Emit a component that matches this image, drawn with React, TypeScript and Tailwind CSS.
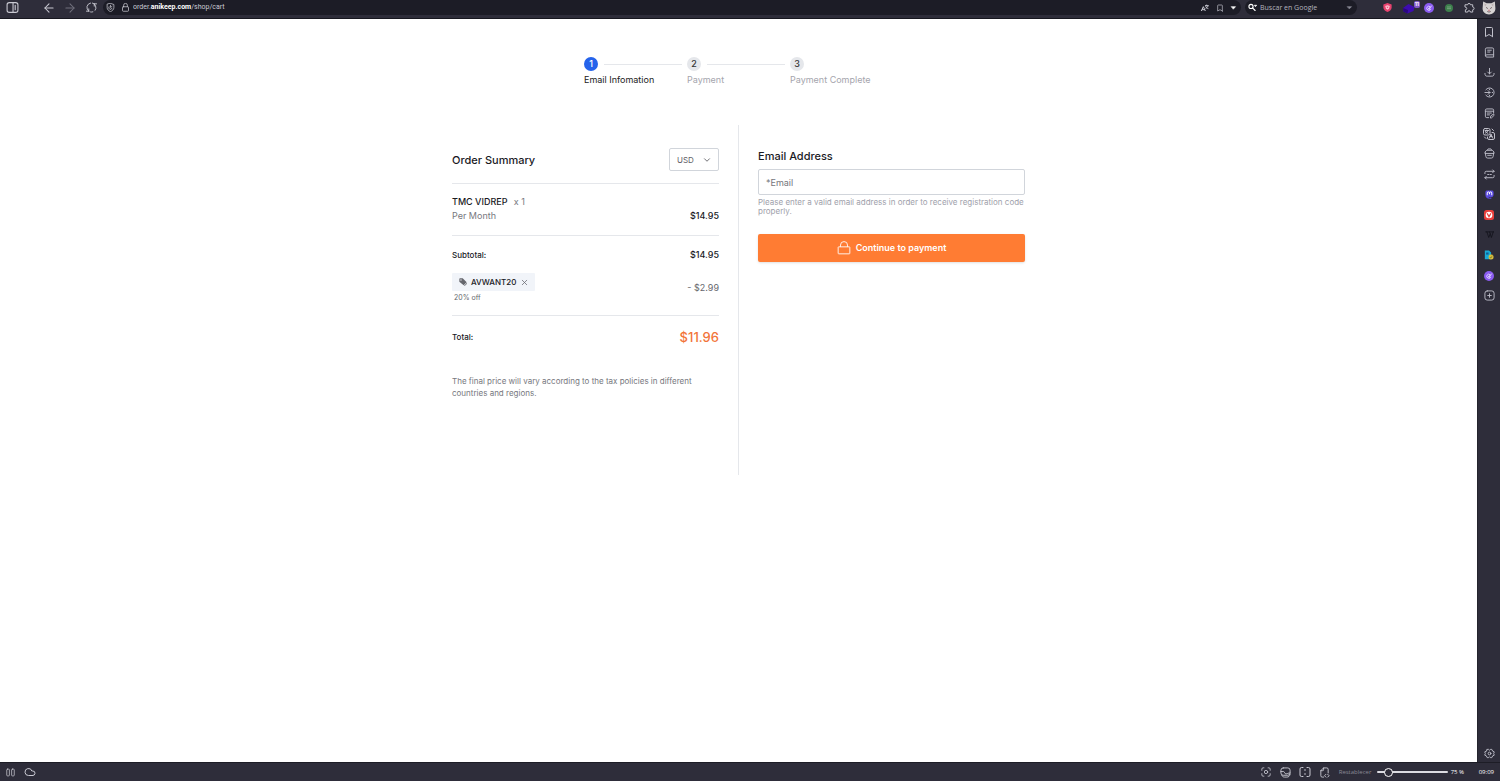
import type { ReactNode } from "react";
import {
  ArrowLeft,
  ArrowRight,
  Bookmark,
  ChevronDown,
  Cloud,
  X,
} from "lucide-react";

function Icon({ children, className = "size-3" }: { children: ReactNode; className?: string }) {
  return (
    <svg
      className={className}
      viewBox="0 0 24 24"
      fill="none"
      stroke="currentColor"
      strokeWidth="2"
      strokeLinecap="round"
      strokeLinejoin="round"
      aria-hidden="true"
    >
      {children}
    </svg>
  );
}

function IconButton({ label, className, children }: { label: string; className: string; children: ReactNode }) {
  return (
    <button type="button" aria-label={label} className={`flex shrink-0 items-center justify-center ${className}`}>
      {children}
    </button>
  );
}

function SwirlBadge({ className = "size-[10px]" }: { className?: string }) {
  return (
    <svg className={className} viewBox="0 0 24 24" aria-hidden="true">
      <circle cx="12" cy="12" r="12" fill="#8b5cf0" />
      <path
        d="M15 9a5 5 0 1 0 1 6l-4 0 6-8M9 15l4-4"
        fill="none"
        stroke="#e6dcff"
        strokeWidth="2"
        strokeLinecap="round"
        strokeLinejoin="round"
      />
    </svg>
  );
}

function TopBar() {
  return (
    <header className="flex h-[19px] shrink-0 items-center border-b border-[#17171f] bg-[#2e2d3a] pb-[3px] text-[#c9c9d2]">
      <IconButton label="Panel" className="ml-[6px] w-[13px]">
        <Icon className="size-[13px]">
          <rect x="2" y="3" width="20" height="18" rx="4" />
          <path d="M13 3v18M17 8v8" />
        </Icon>
      </IconButton>
      <IconButton label="Atrás" className="ml-5 w-5">
        <ArrowLeft className="size-[14px]" strokeWidth={1.8} />
      </IconButton>
      <IconButton label="Adelante" className="w-[22px] text-[#71717d]">
        <ArrowRight className="size-[14px]" strokeWidth={1.8} />
      </IconButton>
      <IconButton label="Recargar" className="w-5">
        <Icon className="size-[11px]">
          <path d="M6 20A10 10 0 0 1 10 2.200M14 2.200A10 10 0 0 1 20 18M6 20v-5M6 20H1M18 4v5M18 4h5M10 21.800A10 10 0 0 0 15 21.500" />
        </Icon>
      </IconButton>

      <div className="ml-[2px] flex h-[15px] min-w-0 flex-1 items-center rounded-full bg-[#1c1c26] pr-[2px]">
        <IconButton label="Bloqueador" className="w-[14px]">
          <Icon className="size-[9px]">
            <path d="M12 1l9 3v8c0 5-4 9-9 11-5-2-9-6-9-11V4z" />
            <path d="M12 6v6l4-3M8 10a4.500 4.500 0 1 0 8 4" />
          </Icon>
        </IconButton>
        <IconButton label="Conexión segura" className="w-4">
          <Icon className="size-[9px]">
            <rect x="4" y="10" width="16" height="12" rx="2" />
            <path d="M7 10V6a5 5 0 0 1 10 0v4" />
          </Icon>
        </IconButton>
        <span className="flex-1 truncate font-['Roboto',sans-serif] text-[7px] leading-[15px]">
          order.<b className="font-bold text-white">anikeep.com</b>/shop/cart
        </span>
        <IconButton label="Traducir" className="w-4">
          <svg className="size-[8px]" viewBox="0 0 24 24" fill="none" stroke="currentColor" strokeWidth="3">
            <path d="M1 21L7 8l6 13M3 17h8M12 5h11M17 2v3M21 5c-1 4-4 7-7 8M14 7c1 3 4 6 8 7" />
          </svg>
        </IconButton>
        <IconButton label="Guardar marcador" className="w-[14px]">
          <Bookmark className="size-[8px]" />
        </IconButton>
        <IconButton label="Más marcadores" className="w-3 text-white">
          <Icon className="size-[7px]">
            <path d="M5 9h14l-7 8z" fill="currentColor" />
          </Icon>
        </IconButton>
      </div>

      <label className="ml-1 flex h-[15px] w-[112px] shrink-0 items-center rounded-full bg-[#1c1c26] pr-1">
        <Icon className="mx-[3px] size-[9px] shrink-0 text-white">
          <circle cx="8" cy="9" r="5.500" strokeWidth="3" />
          <path d="M12 13l7 7" strokeWidth="3" />
          <path d="M18 6h5l-2.500 3z" fill="currentColor" />
        </Icon>
        <input
          type="search"
          aria-label="Buscar"
          placeholder="Buscar en Google"
          className="min-w-0 flex-1 bg-transparent font-['Open_Sans',sans-serif] text-[7px] leading-[15px] outline-none placeholder:text-[#b4b4be]"
        />
        <Icon className="size-[7px] text-[#8d8d98]">
          <path d="M5 9h14l-7 7z" fill="currentColor" />
        </Icon>
      </label>

      <div className="ml-5 flex shrink-0 items-center">
        <IconButton label="Escudo" className="w-5">
          <svg className="size-[9px]" viewBox="0 0 24 24">
            <path d="M12 0l11 4v8c0 6-5 10-11 12C6 22 1 18 1 12V4z" fill="#e8436f" />
            <path d="M12 6l6 2-2 7-4 3-4-3-2-7z" fill="#ffc6d5" />
            <path d="M9 10h6l-3 4z" fill="#e8436f" />
          </svg>
        </IconButton>
        <IconButton label="Extensión, 11 avisos" className="relative w-6">
          <svg className="size-[12px]" viewBox="0 0 24 24">
            <path d="M0 12L11 4l12 6-2 8-12 5-8-4z" fill="#3e0cb0" />
            <path d="M0 12l10 4-1 7-8-4z" fill="#2a0780" />
          </svg>
          <span className="absolute -top-[1px] right-[1px] rounded-[2px] bg-[#8057c9] px-[1px] text-[5px] leading-[7px] font-bold text-white">
            11
          </span>
        </IconButton>
        <IconButton label="Extensión morada" className="w-4">
          <SwirlBadge />
        </IconButton>
        <IconButton label="Extensión verde" className="w-6">
          <svg className="size-[8px]" viewBox="0 0 24 24">
            <circle cx="12" cy="12" r="12" fill="#3d7f4c" />
            <path d="M6 9h12M6 14h12" stroke="#8fb596" strokeWidth="2" />
          </svg>
        </IconButton>
        <IconButton label="Extensiones" className="w-4">
          <Icon className="size-[11px]">
            <path d="M3 6h5a3 3 0 1 1 6 0h5v5a3 3 0 1 1 0 6v5h-5a3 3 0 0 0-6 0H3v-5a3 3 0 0 0 0-6z" />
          </Icon>
        </IconButton>
        <IconButton label="Perfil" className="mr-[3px] ml-[3px] w-[17px]">
          <svg className="size-[14px]" viewBox="0 0 24 24">
            <path d="M2 1l6 3h8l6-3 1 12c0 6-5 10-11 10S1 19 1 13z" fill="#d6d3d3" />
            <path d="M4 4l4 2-3 4zM20 4l-4 2 3 4z" fill="#bdb3b4" />
            <path d="M7 11l3 2M17 11l-3 2M9 18q3 2 6 0" stroke="#68575b" strokeWidth="1.500" fill="none" />
            <circle cx="12" cy="16" r="1.500" fill="#cf8088" />
          </svg>
        </IconButton>
      </div>
    </header>
  );
}

const panels: { label: string; icon: ReactNode }[] = [
  { label: "Marcadores", icon: <Bookmark className="size-[12px]" /> },
  {
    label: "Lista de lectura",
    icon: (
      <Icon className="size-[11px]">
        <path d="M3 19V5a3 3 0 0 1 3-3h12a3 3 0 0 1 3 3v12H6a2 2 0 0 0 0 5h15v-5M8 7h8M8 11h5" />
      </Icon>
    ),
  },
  {
    label: "Descargas",
    icon: (
      <Icon className="size-[11px]">
        <path d="M12 3v12M8 11l4 4 4-4M2 14c0 5 2 6 5 6h10c3 0 5-1 5-6" />
      </Icon>
    ),
  },
  {
    label: "Historial",
    icon: (
      <Icon className="size-[11px]">
        <path d="M4 6a10 10 0 1 1 0 12M2 12h11M9 8l4 4-4 4M12 5v1M18 12h1M12 18v1" />
      </Icon>
    ),
  },
  {
    label: "Notas",
    icon: (
      <Icon className="size-[11px]">
        <path d="M10 21H6a3 3 0 0 1-3-3V5a3 3 0 0 1 3-3h12a3 3 0 0 1 3 3v6M3 7h18M7 11h9M7 15h5M14 21l1-4 6-4 1 3-5 5z" />
      </Icon>
    ),
  },
  {
    label: "Traductor",
    icon: (
      <Icon className="size-3">
        <rect x="1" y="1" width="13" height="13" rx="3" />
        <path d="M4 5h7M7.500 4v1M10 5c-1 3-3 4-5 5M5 7l5 4M18 9h2a3 3 0 0 1 3 3v8a3 3 0 0 1-3 3h-8a3 3 0 0 1-3-3v-2M13 20l3-8 3 8M14 17h4M18 2l3 3M3 18l3 3" />
      </Icon>
    ),
  },
  {
    label: "Sesiones",
    icon: (
      <Icon className="size-[11px]">
        <path d="M7 5l2-3h6l2 3M2 11c0-4 3-6 6-6h8c3 0 6 2 6 6zM3 11l1 7a4 4 0 0 0 4 4h8a4 4 0 0 0 4-4l1-7M8 16h8" />
      </Icon>
    ),
  },
  {
    label: "Feeds",
    icon: (
      <Icon className="size-[11px]">
        <path d="M2 10V8a3 3 0 0 1 3-3h17M19 2l3 3-3 3M22 14v2a3 3 0 0 1-3 3H2M5 16l-3 3 3 3M8 12h3M14 12h2" />
      </Icon>
    ),
  },
  {
    label: "Mastodon",
    icon: (
      <svg className="size-[9px]" viewBox="0 0 24 24">
        <path d="M5 1h14c3 1 4 3 4 6 0 10-1 11-8 12l-6-1c1 3 4 3 8 2v3C8 25 1 22 1 12V6c0-3 1-4 4-5z" fill="#5b4be0" />
        <path d="M6 14V8c0-4 6-4 6 0v3-3c0-4 6-4 6 0v6" stroke="#fff" strokeWidth="2.500" fill="none" />
      </svg>
    ),
  },
  {
    label: "Vivaldi",
    icon: (
      <svg className="size-[10px]" viewBox="0 0 24 24">
        <rect width="24" height="24" rx="6" fill="#e8403c" />
        <circle cx="12" cy="12" r="8" fill="#fff" />
        <path d="M8 9l4 7 4-7" stroke="#e8403c" strokeWidth="3" strokeLinecap="round" fill="none" />
      </svg>
    ),
  },
  {
    label: "Wikipedia",
    icon: (
      <Icon className="size-[9px] text-[#101018]">
        <path d="M2 5h6M10 5h6M18 5h5M5 5l5 15 4-10M12 5l5 15 5-15" />
      </Icon>
    ),
  },
  {
    label: "Documentos",
    icon: (
      <svg className="size-[10px]" viewBox="0 0 24 24">
        <path d="M2 1h10l5 5v16H2z" fill="#19a9d6" />
        <path d="M5 6h6v5H5z" fill="#125c94" />
        <circle cx="17" cy="17" r="6" fill="#d8bd3d" />
        <path d="M14 17l2 2 4-4" stroke="#5c6b2a" strokeWidth="2" fill="none" />
      </svg>
    ),
  },
  { label: "Panel morado", icon: <SwirlBadge /> },
  {
    label: "Añadir panel web",
    icon: (
      <Icon className="size-[11px]">
        <rect x="2" y="2" width="20" height="20" rx="5" />
        <path d="M12 8v8M8 12h8" />
      </Icon>
    ),
  },
];

function SidePanel() {
  return (
    <aside className="flex w-[23px] shrink-0 flex-col items-center justify-between border-l border-[#24242d] bg-[#2e2d3a] pt-[3px] pb-[2px] text-[#c0c0ca]">
      <nav className="flex h-[284px] flex-col">
        {panels.map((panel) => (
          <IconButton key={panel.label} label={panel.label} className="w-5 flex-1">
            {panel.icon}
          </IconButton>
        ))}
      </nav>
      <IconButton label="Ajustes" className="size-[14px]">
        <Icon className="size-[11px]">
          <path d="M7 3h3l2 2 2-2h3l2 4 3 1v3l-1 1 1 1v3l-3 1-2 4h-3l-2-2-2 2H7l-2-4-3-1v-3l1-1-1-1V8l3-1z" />
          <circle cx="12" cy="12" r="3" />
        </Icon>
      </IconButton>
    </aside>
  );
}

function StatusBar() {
  return (
    <footer className="flex h-[19px] shrink-0 items-center border-t border-[#1d1d26] bg-[#2e2d3a] pr-[6px] font-['Open_Sans',sans-serif] text-[6px] text-[#c9c9d2]">
      <IconButton label="Pausar" className="w-5">
        <Icon className="size-[9px]">
          <rect x="2" y="3" width="7" height="18" rx="2" />
          <rect x="15" y="3" width="7" height="18" rx="2" />
        </Icon>
      </IconButton>
      <IconButton label="Sincronizar" className="w-5">
        <Cloud className="size-3" />
      </IconButton>
      <div className="ml-auto flex items-center">
        <IconButton label="Capturar" className="w-5">
          <Icon className="size-[10px]">
            <path d="M2 8V5a3 3 0 0 1 3-3h2M17 2h2a3 3 0 0 1 3 3v3M22 16v3a3 3 0 0 1-3 3h-2M7 22H5a3 3 0 0 1-3-3v-3" />
            <circle cx="12" cy="12" r="4" />
          </Icon>
        </IconButton>
        <IconButton label="Imágenes" className="w-[19px]">
          <Icon className="size-[11px]">
            <rect x="2" y="2" width="20" height="16" rx="5" />
            <path d="M2 10h6c2 0 2 5 5 5s4-2 9-2M4 18c1 3 3 4 6 4h5c4 0 6-2 7-6" />
          </Icon>
        </IconButton>
        <IconButton label="Mosaico" className="w-5">
          <Icon className="size-[12px]">
            <path d="M8 3H5a3 3 0 0 0-3 3v12a3 3 0 0 0 3 3h3M16 3h3a3 3 0 0 1 3 3v12a3 3 0 0 1-3 3h-3M12 7v2M12 15v2" />
          </Icon>
        </IconButton>
        <IconButton label="Acciones de página" className="w-5">
          <Icon className="size-[11px]">
            <path d="M10 22H7a3 3 0 0 1-3-3V8l6-6h7a3 3 0 0 1 3 3v8M4 8h4a2 2 0 0 0 2-2V2M15 16l-3 3 3 3M19 16l3 3-3 3" />
          </Icon>
        </IconButton>
        <button type="button" className="ml-1 w-[33px] text-left text-[#8a8a96]">
          Restablecer
        </button>
        <input
          type="range"
          aria-label="Zoom de página"
          min={20}
          max={500}
          defaultValue={75}
          className="ml-[5px] h-[2px] w-[71px] appearance-none rounded-full bg-[#dcdce2] [&::-webkit-slider-thumb]:size-[9px] [&::-webkit-slider-thumb]:appearance-none [&::-webkit-slider-thumb]:rounded-full [&::-webkit-slider-thumb]:border [&::-webkit-slider-thumb]:border-white [&::-webkit-slider-thumb]:bg-[#2e2d3a]"
        />
        <span className="ml-[3px] w-[28px] text-white">75 %</span>
        <span className="text-white">09:09</span>
      </div>
    </footer>
  );
}

const steps = ["Email Infomation", "Payment", "Payment Complete"];

function Steps() {
  return (
    <ol className="mx-auto grid w-[309px] grid-cols-3">
      {steps.map((step, index) => (
        <li key={step} className={index === 0 ? "text-[#222]" : "text-[#a5a5ad]"}>
          <div className="flex items-center">
            <span
              className={`flex size-[14px] items-center justify-center rounded-full text-[9px] font-medium ${
                index === 0 ? "bg-[#2563eb] text-white" : "bg-[#e5e7eb] text-[#333]"
              }`}
            >
              {index + 1}
            </span>
            {index < 2 && <span className="mr-[5px] ml-[6px] h-px flex-1 bg-[#e5e7eb]" />}
          </div>
          <p className="mt-[3px] text-[9px] leading-3 whitespace-nowrap">{step}</p>
        </li>
      ))}
    </ol>
  );
}

function OrderSummary() {
  return (
    <section className="flex-1 border-r border-[#e5e7eb] pt-[23px] pr-[19px]">
      <div className="flex items-center justify-between border-b border-[#e5e7eb] pb-3">
        <h2 className="text-[11px] leading-4 font-medium text-[#1a1a1f]">Order Summary</h2>
        <div className="relative flex">
          <select
            aria-label="Currency"
            className="h-[23px] w-[50px] appearance-none rounded-[2px] border border-[#d1d5db] bg-white pl-[7px] text-[8px] text-[#5f6066]"
          >
            <option>USD</option>
          </select>
          <ChevronDown className="pointer-events-none absolute top-[7px] right-[7px] size-[10px] text-[#55565c]" />
        </div>
      </div>

      <div className="border-b border-[#e5e7eb] pt-[11px] pb-3">
        <h3 className="text-[9px] leading-[14px] font-medium text-[#1a1a1f]">
          TMC VIDREP <span className="ml-1 font-normal text-[#77787e]">x 1</span>
        </h3>
        <div className="flex justify-between text-[9px] leading-[14px]">
          <span className="text-[#77787e]">Per Month</span>
          <span className="font-medium text-[#1a1a1f]">$14.95</span>
        </div>
      </div>

      <div className="border-b border-[#e5e7eb] pt-3 pb-3">
        <div className="flex items-center justify-between leading-[14px] font-medium text-[#1a1a1f]">
          <span className="text-[8px]">Subtotal:</span>
          <span className="text-[9px]">$14.95</span>
        </div>
        <div className="mt-[11px] flex items-center justify-between">
          <div>
            <div className="flex h-[18px] items-center rounded-[1px] bg-[#f1f4f9] pr-[6px] pl-[7px] text-[8px] font-medium text-[#1a1a1f]">
              <svg className="mr-1 size-2 text-[#66676d]" viewBox="0 0 24 24" fill="currentColor">
                <path fillRule="evenodd" d="M1 3a2 2 0 0 1 2-2h8l12 12-9 9L1 11zM6 4a2 2 0 1 0 0 4 2 2 0 0 0 0-4z" />
                <path d="M15 23l9-9v3l-7 7z" />
              </svg>
              AVWANT20
              <button type="button" aria-label="Remove coupon" className="ml-1 text-[#66676d]">
                <X className="size-[9px]" />
              </button>
            </div>
            <p className="ml-[2px] pt-[2px] text-[7px] leading-[10px] text-[#66676d]">20% off</p>
          </div>
          <span className="text-[9px] text-[#66676d]">- $2.99</span>
        </div>
      </div>

      <div className="flex items-center justify-between pt-[11px]">
        <span className="text-[8px] font-medium text-[#1a1a1f]">Total:</span>
        <span className="text-[13px] leading-5 font-medium text-[#f27439]">$11.96</span>
      </div>
      <p className="mt-7 max-w-[250px] text-[8px] leading-3 text-[#77787e]">
        The final price will vary according to the tax policies in different countries and regions.
      </p>
    </section>
  );
}

function EmailForm() {
  return (
    <form className="flex-1 pt-[23px] pl-[19px]">
      <label htmlFor="email" className="block text-[11px] leading-4 font-medium text-[#1a1a1f]">
        Email Address
      </label>
      <input
        id="email"
        type="email"
        placeholder="*Email"
        className="mt-[5px] block h-[26px] w-full rounded-[2px] border border-[#d1d5db] px-[7px] text-[9px] text-[#333] outline-none placeholder:text-[#75767c]"
      />
      <p className="mt-[3px] text-[8px] leading-[9px] text-[#a0a1ab]">
        Please enter a valid email address in order to receive registration code properly.
      </p>
      <button
        type="button"
        className="mt-[18px] flex h-7 w-full items-center justify-center gap-[5px] rounded-[2px] bg-[#ff7c33] text-[9px] font-semibold text-white shadow-sm"
      >
        <svg className="size-[14px]" viewBox="0 0 24 24" fill="none" stroke="currentColor" strokeWidth="1.500">
          <rect x="2" y="10" width="20" height="12" rx="1" />
          <path d="M6 10V7a6 6 0 0 1 12 0v3" />
        </svg>
        Continue to payment
      </button>
    </form>
  );
}

export default function App() {
  return (
    <div className="flex h-screen flex-col overflow-hidden bg-white font-['Inter',sans-serif]">
      <TopBar />
      <div className="flex min-h-0 flex-1">
        <main className="min-w-0 flex-1 overflow-auto pt-[38px]">
          <Steps />
          <div className="mx-auto mt-[39px] flex min-h-[350px] w-full max-w-[573px]">
            <OrderSummary />
            <EmailForm />
          </div>
        </main>
        <SidePanel />
      </div>
      <StatusBar />
    </div>
  );
}
